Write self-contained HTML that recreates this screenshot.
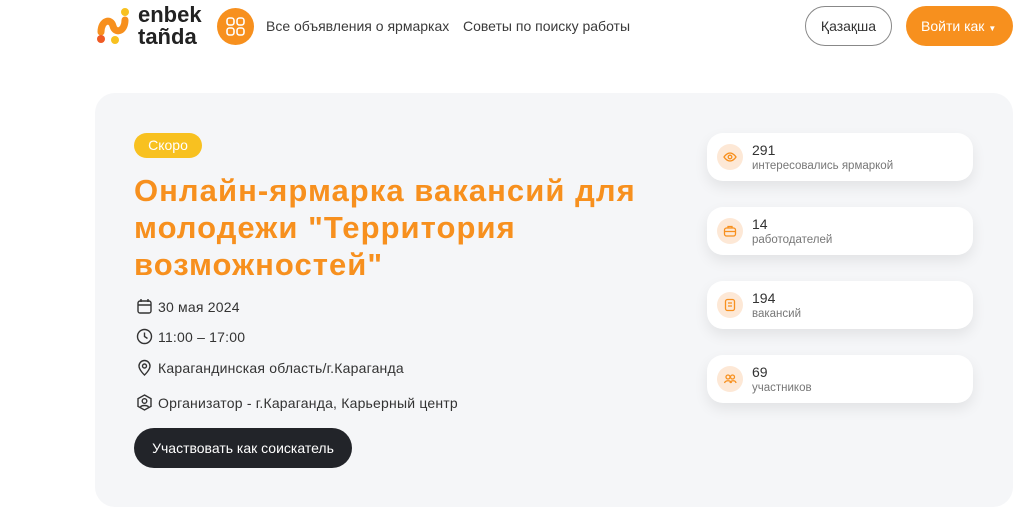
<!DOCTYPE html>
<html><head><meta charset="utf-8"><style>
*{margin:0;padding:0;box-sizing:border-box}
body{width:1024px;height:518px;background:#fff;font-family:"Liberation Sans",sans-serif;position:relative;overflow:hidden;color:#333}
.abs{position:absolute}
.nav{font-size:14px;color:#3a3a3a;top:18px}
.card{left:95px;top:93px;width:918px;height:414px;background:#f5f6f8;border-radius:20px}
.badge{left:134px;top:133px;width:68px;height:25px;background:#f8c120;border-radius:13px;color:#fff;font-size:14px;text-align:center;line-height:25px}
.title{left:134px;top:172px;width:580px;font-size:31px;font-weight:bold;color:#f7901e;line-height:37px;letter-spacing:1.05px}
.info{left:136px;font-size:14px;color:#333;display:flex;align-items:center;gap:5px;letter-spacing:.2px}
.stat{left:707px;width:266px;height:48px;background:#fff;border-radius:16px;box-shadow:0 6px 14px rgba(0,0,0,.08)}
.stat .ic{position:absolute;left:10px;top:11px;width:26px;height:26px;border-radius:50%;background:#fde8d6;display:flex;align-items:center;justify-content:center}
.stat .n{position:absolute;left:45px;top:9px;font-size:14px;color:#333}
.stat .l{position:absolute;left:45px;top:27px;font-size:11.5px;color:#777}
</style></head><body>
<svg class="abs" style="left:95px;top:6px" width="38" height="40" viewBox="0 0 38 40"><path d="M6 26 C6 14 16 12 18 20 C20 28 30 26 30 14" stroke="#f7901e" stroke-width="7" fill="none" stroke-linecap="round"/><circle cx="6" cy="33" r="4" fill="#ef5a24"/><circle cx="30" cy="6" r="4" fill="#f8c120"/><circle cx="20" cy="34" r="4" fill="#f8c120"/></svg>
<div class="abs" style="left:138px;top:4px;font-size:22px;font-weight:bold;color:#222;line-height:22px">enbek<br>tañda</div>
<div class="abs" style="left:217px;top:8px;width:37px;height:37px;border-radius:50%;background:#f7901e"><svg width="37" height="37" viewBox="0 0 37 37" fill="none" stroke="#fff" stroke-width="1.6"><rect x="10" y="10" width="7" height="7" rx="2.5"/><rect x="20" y="10" width="7" height="7" rx="2.5"/><rect x="10" y="20" width="7" height="7" rx="2.5"/><rect x="20" y="20" width="7" height="7" rx="2.5"/></svg></div>
<div class="abs nav" style="left:266px">Все объявления о ярмарках</div>
<div class="abs nav" style="left:463px">Советы по поиску работы</div>
<div class="abs" style="left:805px;top:6px;width:87px;height:40px;border:1px solid #888;border-radius:20px;font-size:14px;text-align:center;line-height:38px;color:#333">Қазақша</div>
<div class="abs" style="left:906px;top:6px;width:107px;height:40px;background:#f7901e;border-radius:20px;font-size:14px;color:#fff;line-height:40px;padding-left:15px">Войти как <span style="font-size:8px">▼</span></div>
<div class="abs card"></div>
<div class="abs badge">Скоро</div>
<div class="abs title">Онлайн-ярмарка вакансий для молодежи "Территория возможностей"</div>
<div class="abs info" style="top:298px"><svg width="17" height="17" viewBox="0 0 17 17" fill="none" stroke="#333" stroke-width="1.4"><rect x="2" y="3" width="13" height="12" rx="2"/><path d="M5 1v3M12 1v3M2 7h13"/></svg>30 мая 2024</div>
<div class="abs info" style="top:328px"><svg width="17" height="17" viewBox="0 0 17 17" fill="none" stroke="#333" stroke-width="1.4"><circle cx="8.5" cy="8.5" r="7"/><path d="M8.5 4.5v4l3 2"/></svg>11:00 – 17:00</div>
<div class="abs info" style="top:359px"><svg width="17" height="17" viewBox="0 0 17 17" fill="none" stroke="#333" stroke-width="1.4"><path d="M8.5 16s-5.5-5-5.5-9a5.5 5.5 0 0 1 11 0c0 4-5.5 9-5.5 9z"/><circle cx="8.5" cy="7" r="2"/></svg>Карагандинская область/г.Караганда</div>
<div class="abs info" style="top:394px"><svg width="17" height="17" viewBox="0 0 17 17" fill="none" stroke="#333" stroke-width="1.4"><path d="M8.5 1l6.5 3.7v7.6L8.5 16 2 12.3V4.7z"/><circle cx="8.5" cy="7" r="2.3"/><path d="M4.5 13c1-2 7-2 8 0"/></svg>Организатор - г.Караганда, Карьерный центр</div>
<div class="abs" style="left:134px;top:428px;width:218px;height:40px;background:#222429;border-radius:20px;color:#fff;font-size:14px;text-align:center;line-height:40px">Участвовать как соискатель</div>
<div class="abs stat" style="top:133px"><div class="ic"><svg width="14" height="14" viewBox="0 0 14 14" fill="none" stroke="#f7901e" stroke-width="1.3"><path d="M1 7s2.5-4 6-4 6 4 6 4-2.5 4-6 4-6-4-6-4z"/><circle cx="7" cy="7" r="1.8"/></svg></div><div class="n">291</div><div class="l">интересовались ярмаркой</div></div>
<div class="abs stat" style="top:207px"><div class="ic"><svg width="14" height="14" viewBox="0 0 14 14" fill="none" stroke="#f7901e" stroke-width="1.3"><rect x="1.5" y="4" width="11" height="8" rx="2"/><path d="M5 4V2.5h4V4M1.5 7.5h11"/></svg></div><div class="n">14</div><div class="l">работодателей</div></div>
<div class="abs stat" style="top:281px"><div class="ic"><svg width="14" height="14" viewBox="0 0 14 14" fill="none" stroke="#f7901e" stroke-width="1.3"><rect x="2.5" y="1.5" width="9" height="11" rx="2"/><path d="M5 5h4M5 8h4"/></svg></div><div class="n">194</div><div class="l">вакансий</div></div>
<div class="abs stat" style="top:355px"><div class="ic"><svg width="14" height="14" viewBox="0 0 14 14" fill="none" stroke="#f7901e" stroke-width="1.3"><circle cx="5" cy="5" r="2"/><circle cx="9.5" cy="5" r="2"/><path d="M1.5 11c1-3 6-3 7 0M7 11c1-3 5.5-3 6 0"/></svg></div><div class="n">69</div><div class="l">участников</div></div>
</body></html>
